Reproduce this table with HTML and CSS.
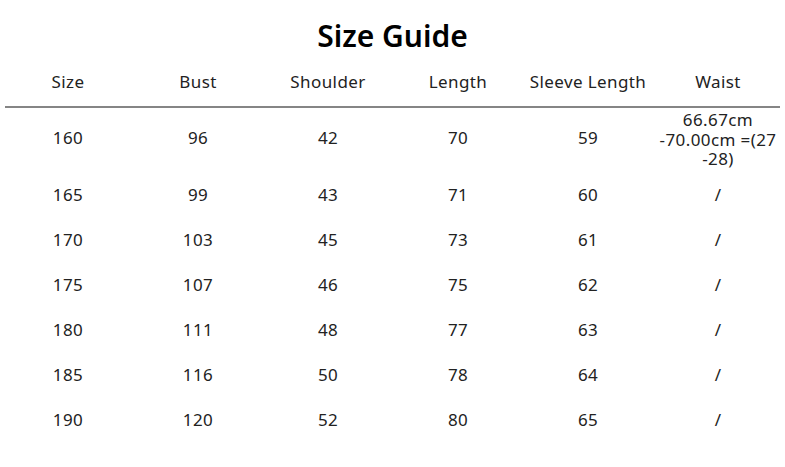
FILE: index.html
```html
<!DOCTYPE html>
<html>
<head>
<meta charset="utf-8">
<link rel="stylesheet" href="styles.css">
</head>
<body>
<div class="page">
  <h1 class="title">Size Guide</h1>
  <div class="table">
    <div class="row head">
      <div>Size</div><div>Bust</div><div>Shoulder</div><div>Length</div><div>Sleeve Length</div><div>Waist</div>
    </div>
    <div class="rule"></div>
    <div class="row first">
      <div>160</div><div>96</div><div>42</div><div>70</div><div>59</div><div class="multi">66.67cm<br>-70.00cm =(27<br>-28)</div>
    </div>
    <div class="row"><div>165</div><div>99</div><div>43</div><div>71</div><div>60</div><div>/</div></div>
    <div class="row"><div>170</div><div>103</div><div>45</div><div>73</div><div>61</div><div>/</div></div>
    <div class="row"><div>175</div><div>107</div><div>46</div><div>75</div><div>62</div><div>/</div></div>
    <div class="row"><div>180</div><div>111</div><div>48</div><div>77</div><div>63</div><div>/</div></div>
    <div class="row"><div>185</div><div>116</div><div>50</div><div>78</div><div>64</div><div>/</div></div>
    <div class="row"><div>190</div><div>120</div><div>52</div><div>80</div><div>65</div><div>/</div></div>
  </div>
</div>
</body>
</html>
```

FILE: styles.css
```css
html, body {
  margin: 0;
  padding: 0;
  background: #fff;
}
.page {
  width: 785px;
  height: 467px;
  font-family: "Noto Sans", "Open Sans", sans-serif;
  color: #222;
  overflow: hidden;
}
.title {
  margin: 0;
  padding-top: 14px;
  height: 44px;
  line-height: 44px;
  text-align: center;
  font-size: 30px;
  font-weight: 600;
  color: #000;
}
.table {
  margin-left: 3px;
  width: 780px;
}
.row {
  display: grid;
  grid-template-columns: repeat(6, 130px);
  align-items: center;
  font-size: 17px;
  letter-spacing: 0.4px;
  line-height: 20px;
  text-align: center;
  height: 45px;
}
.head {
  height: 48px;
  align-items: start;
  padding-top: 14px;
  box-sizing: border-box;
}
.rule {
  margin-left: 2px;
  width: 775px;
  height: 2px;
  background: #858585;
}
.first {
  height: 64px;
  padding-bottom: 4px;
  box-sizing: border-box;
}
.multi {
  line-height: 19.5px;
  margin-top: 2px;
}
```
